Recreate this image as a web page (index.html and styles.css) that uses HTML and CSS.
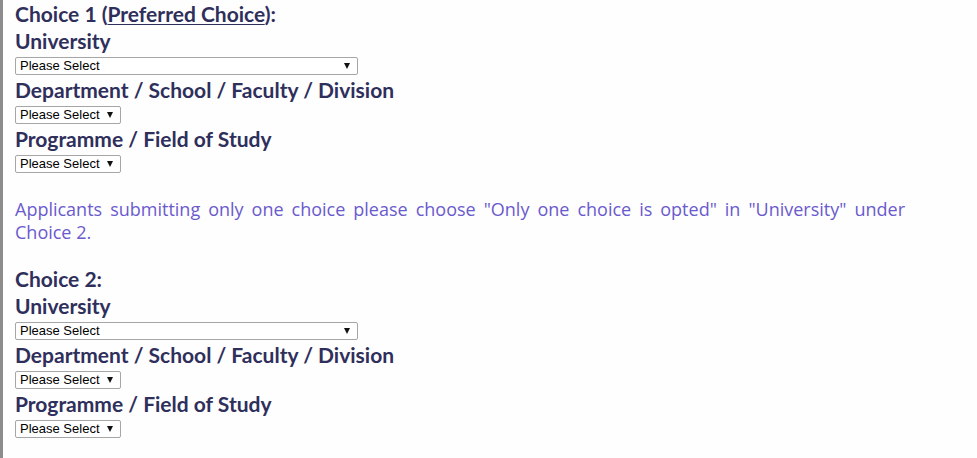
FILE: index.html
```html
<!DOCTYPE html>
<html>
<head>
<meta charset="utf-8">
<link rel="stylesheet" href="styles.css">
</head>
<body>
<div class="page">
  <section class="choice">
    <h3 class="choice-title">Choice 1 (<u>Preferred Choice</u>):</h3>
    <div class="field">
      <label class="field-label">University</label>
      <span class="select-wrap wide"><select class="select"><option>Please Select</option></select></span>
    </div>
    <div class="field">
      <label class="field-label">Department / School / Faculty / Division</label>
      <span class="select-wrap"><select class="select"><option>Please Select</option></select></span>
    </div>
    <div class="field">
      <label class="field-label">Programme / Field of Study</label>
      <span class="select-wrap"><select class="select"><option>Please Select</option></select></span>
    </div>
  </section>

  <p class="note">Applicants submitting only one choice please choose "Only one choice is opted" in "University" under Choice 2.</p>

  <section class="choice">
    <h3 class="choice-title">Choice 2:</h3>
    <div class="field">
      <label class="field-label">University</label>
      <span class="select-wrap wide"><select class="select"><option>Please Select</option></select></span>
    </div>
    <div class="field">
      <label class="field-label">Department / School / Faculty / Division</label>
      <span class="select-wrap"><select class="select"><option>Please Select</option></select></span>
    </div>
    <div class="field">
      <label class="field-label">Programme / Field of Study</label>
      <span class="select-wrap"><select class="select"><option>Please Select</option></select></span>
    </div>
  </section>
</div>
</body>
</html>
```
FILE: styles.css
```css
html, body {
  margin: 0;
  padding: 0;
  background: #fefefe;
}
body {
  height: 458px;
  overflow: hidden;
}
.page {
  border-left: 3px solid #8c8c8c;
  min-height: 458px;
  box-sizing: border-box;
  padding: 2px 72px 0 12px;
}
.choice {
  display: flex;
  flex-direction: column;
  align-items: flex-start;
}
.choice-title {
  margin: 0 0 3px;
  font-family: Lato, "Open Sans", sans-serif;
  font-weight: 700;
  font-size: 21px;
  line-height: 24px;
  color: #2f2f5c;
}
.choice-title u {
  text-decoration-thickness: 1px;
  text-underline-offset: 2px;
}
.field {
  display: flex;
  flex-direction: column;
  align-items: flex-start;
  margin-bottom: 3px;
}
.field-label {
  font-family: Lato, "Open Sans", sans-serif;
  font-weight: 700;
  font-size: 21px;
  line-height: 24px;
  color: #2f2f5c;
  margin-bottom: 4px;
}
.select-wrap {
  position: relative;
  display: block;
  width: 106px;
  height: 18px;
}
.select-wrap.wide {
  width: 343px;
}
.select-wrap::after {
  content: "";
  position: absolute;
  right: 8px;
  top: 6px;
  border-left: 3px solid transparent;
  border-right: 3px solid transparent;
  border-top: 6px solid #111;
  pointer-events: none;
}
.select {
  appearance: none;
  -webkit-appearance: none;
  display: block;
  width: 100%;
  height: 18px;
  margin: 0;
  padding: 0 0 0 4px;
  box-sizing: border-box;
  border: 1px solid #a6a6a6;
  border-radius: 2px;
  background: #fff;
  font-family: "Liberation Sans", Arial, sans-serif;
  font-size: 13px;
  line-height: 16px;
  color: #000;
}
.note {
  margin: 22px 0 23px;
  font-family: "Open Sans", sans-serif;
  font-size: 18px;
  line-height: 23px;
  color: #6a5acd;
  text-align: justify;
}
```
